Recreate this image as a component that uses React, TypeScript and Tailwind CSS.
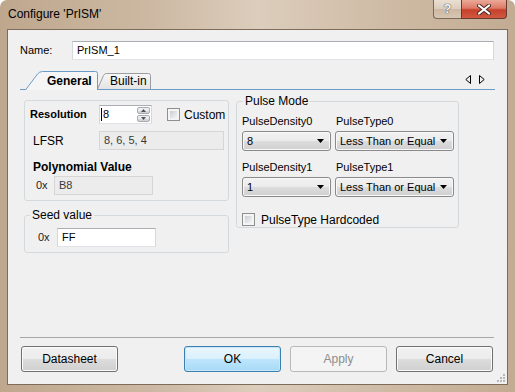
import type { ReactNode } from "react";

const btnFace =
	"bg-[linear-gradient(#f2f2f2_0%,#ebebeb_50%,#dddddd_50%,#cfcfcf_100%)]";

function DropArrow() {
	return (
		<svg width="7" height="4" viewBox="0 0 7 4">
			<path d="M0 0h7L3.5 4z" fill="#000" />
		</svg>
	);
}

function Combo({ value, width }: { value: string; width: string }) {
	return (
		<div
			className={`flex h-[20px] ${width} items-center rounded-[3px] border border-[#8a8a8a] ${btnFace} pl-[4px] pr-[6px] shadow-[inset_0_0_0_1px_#f8f8f8]`}
		>
			<span className="flex-1 leading-none">{value}</span>
			<DropArrow />
		</div>
	);
}

function CheckBox() {
	return (
		<div className="h-[13px] w-[13px] shrink-0 border border-[#8e8f8f] bg-[#f4f4f4] p-[2px]">
			<div className="h-full w-full bg-[linear-gradient(135deg,#c9cdd3,#f5f5f5)]" />
		</div>
	);
}

function Field({
	children,
	width,
	disabled = false,
}: {
	children: ReactNode;
	width: string;
	disabled?: boolean;
}) {
	return (
		<div
			className={`flex h-[19px] ${width} items-center border pl-[4px] ${
				disabled
					? "border-[#d6d6d6] bg-[#ececec] text-[#3a3a3a]"
					: "border-[#abadb3] border-x-[#d4d7dc] border-b-[#dfe3e8] bg-white"
			}`}
		>
			{children}
		</div>
	);
}

function DialogButton({
	label,
	kind = "normal",
	className = "",
}: {
	label: string;
	kind?: "normal" | "default" | "disabled";
	className?: string;
}) {
	const look =
		kind === "default"
			? "border-[#3c7fb1] bg-[linear-gradient(#eaf6fd_0%,#d9f0fc_50%,#bee6fd_50%,#a7d9f5_100%)] shadow-[inset_0_0_0_1px_#c8e6f6]"
			: kind === "disabled"
				? "border-[#b5b9bc] bg-[#f4f4f4] text-[#8d8d8d]"
				: `border-[#707070] ${btnFace} shadow-[inset_0_0_0_1px_#fbfbfb]`;
	return (
		<div
			className={`flex h-[26px] w-[97px] items-center justify-center rounded-[3px] border text-[12px] ${look} ${className}`}
		>
			{label}
		</div>
	);
}

export default function App() {
	return (
		<div className="relative h-[392px] w-[515px] overflow-hidden rounded-t-[7px] bg-[linear-gradient(90deg,#bea78d_0%,#cdb9a3_30%,#dccdbc_50%,#cfbba5_75%,#c2ab92_100%)] font-['Liberation_Sans',Arial,sans-serif] text-[11px] text-black">
			{/* Title bar */}
			<div className="flex h-[29px] items-start">
				<div className="pl-[8px] pt-[7px] text-[12px] leading-[15px]">
					Configure 'PrISM'
				</div>
				<div className="ml-auto mr-[8px] flex h-[19px]">
					<div className="flex w-[28px] items-center justify-center rounded-bl-[4px] border border-r-0 border-t-0 border-[#7a6a5a] bg-[linear-gradient(#eadfd3_0%,#dccdbd_50%,#cbb7a2_50%,#d8c6b2_100%)] text-[13px] font-bold text-[#f6f6f6] [text-shadow:0_0_1px_#444,0_0_1px_#444]">
						?
					</div>
					<div className="flex w-[46px] items-center justify-center rounded-br-[4px] border border-t-0 border-[#6a3a30] bg-[linear-gradient(#eba898_0%,#dc7b66_45%,#c7412c_55%,#d0593f_100%)]">
						<svg width="14" height="11" viewBox="0 0 14 11">
							<path d="M2 1.5l10 8M12 1.5l-10 8" stroke="#4a2a24" strokeWidth="4" strokeLinecap="round" />
							<path d="M2 1.5l10 8M12 1.5l-10 8" stroke="#fff" strokeWidth="2.2" strokeLinecap="round" />
						</svg>
					</div>
				</div>
			</div>

			{/* Client area */}
			<div className="relative mx-[7px] flex h-[356px] flex-col border border-[#7d6c5a] bg-[#f0f0f0] px-[12px]">
				{/* Name */}
				<div className="mt-[11px] flex h-[19px] items-center">
					<span className="w-[52px]">Name:</span>
					<div className="mr-[1px] flex h-full flex-1 items-center border border-[#abadb3] border-x-[#d4d7dc] border-b-[#dfe3e8] bg-white pl-[4px]">
						PrISM_1
					</div>
				</div>

				{/* Tab strip */}
				<div className="mt-[11px] flex h-[19px] items-end border-b border-[#6d9bc9] pl-[5px]">
					<div className="relative z-10 mb-[-1px] h-[19px] w-[73px]">
						<svg className="absolute inset-0" width="73" height="19" viewBox="0 0 73 19">
							<path
								d="M0.5 19 L12.5 3 Q14.5 0.5 17.5 0.5 L70.5 0.5 Q72.5 0.5 72.5 2.5 L72.5 19"
								fill="#f5f5f5"
								stroke="#6d9bc9"
							/>
						</svg>
						<div className="relative pl-[22px] pt-[3px] text-[12px] font-bold leading-[14px]">
							General
						</div>
					</div>
					<div className="relative ml-[-1px] h-[16px] w-[54px]">
						<svg className="absolute inset-0" width="54" height="16" viewBox="0 0 54 16">
							<defs>
								<linearGradient id="bt" x1="0" y1="0" x2="0" y2="1">
									<stop offset="0" stopColor="#f7f7f7" />
									<stop offset="1" stopColor="#e4e4e4" />
								</linearGradient>
							</defs>
							<path
								d="M0.5 16 L6.5 2.5 Q7.5 0.5 9.5 0.5 L51.5 0.5 Q53.5 0.5 53.5 2.5 L53.5 16"
								fill="url(#bt)"
								stroke="#9a9ca2"
							/>
						</svg>
						<div className="relative pl-[13px] pt-[1px] text-[12px] leading-[14px]">
							Built-in
						</div>
					</div>
					<div className="mb-[5px] ml-auto mr-[10px] flex gap-[8px]">
						<svg width="6" height="9" viewBox="0 0 6 9">
							<path d="M5.5 0.5 L0.8 4.5 L5.5 8.5 Z" fill="none" stroke="#000" />
						</svg>
						<svg width="6" height="9" viewBox="0 0 6 9">
							<path d="M0.5 0.5 L5.2 4.5 L0.5 8.5 Z" fill="none" stroke="#000" />
						</svg>
					</div>
				</div>

				{/* Tab content */}
				<div className="flex flex-1 items-start gap-[7px] pl-[4px] pt-[10px]">
					<div className="flex w-[205px] flex-col">
						<fieldset className="h-[101px] rounded-[3px] border border-[#d3d9dd] pl-[5px] pt-[4px]">
							<div className="flex h-[19px] items-center">
								<span className="w-[69px] text-[11px] font-bold">Resolution</span>
								<div className="flex h-[19px] w-[53px] items-center border border-[#abadb3] border-x-[#d4d7dc] border-b-[#dfe3e8] bg-white pl-[1px]">
									<span className="h-[13px] w-px bg-black" />
									<span className="flex-1 pl-[1px]">8</span>
									<div className="mr-[1px] flex h-[15px] w-[13px] flex-col gap-px">
										<div className={`flex flex-1 items-center justify-center rounded-[2px] border border-[#a8acb2] ${btnFace}`}>
											<svg width="5" height="3" viewBox="0 0 5 3">
												<path d="M0 3h5L2.5 0z" fill="#4a5460" />
											</svg>
										</div>
										<div className={`flex flex-1 items-center justify-center rounded-[2px] border border-[#a8acb2] ${btnFace}`}>
											<svg width="5" height="3" viewBox="0 0 5 3">
												<path d="M0 0h5L2.5 3z" fill="#4a5460" />
											</svg>
										</div>
									</div>
								</div>
								<div className="ml-[15px] flex items-center gap-[4px]">
									<CheckBox />
									<span className="text-[12px]">Custom</span>
								</div>
							</div>
							<div className="mt-[7px] flex h-[19px] items-center">
								<span className="w-[69px] pl-[3px] text-[12px]">LFSR</span>
								<Field width="w-[125px]" disabled>
									8, 6, 5, 4
								</Field>
							</div>
							<div className="mt-[10px] flex h-[14px] items-center pl-[3px] text-[12px] font-bold">
								Polynomial Value
							</div>
							<div className="mt-[2px] flex h-[19px] items-center">
								<span className="w-[24px] pl-[6px] text-[11px] text-[#222]">0x</span>
								<Field width="w-[99px]" disabled>
									B8
								</Field>
							</div>
						</fieldset>

						<fieldset className="mt-[8px] rounded-[3px] border border-[#d3d9dd] pb-[5px] pl-[5px]">
							<legend className="px-[2px] text-[12px] leading-[13px]">
								Seed value
							</legend>
							<div className="mt-[6px] flex h-[19px] items-center">
								<span className="w-[27px] pl-[8px] text-[11px] text-[#222]">0x</span>
								<Field width="w-[99px]">FF</Field>
							</div>
						</fieldset>
					</div>

					<fieldset className="-mt-[5px] w-[223px] rounded-[3px] border border-[#d3d9dd] pb-[1px] pl-[5px]">
						<legend className="ml-[1px] px-[2px] text-[12px] leading-[13px]">
							Pulse Mode
						</legend>
						<div className="mt-[6px] grid grid-cols-[89px_119px] gap-x-[4px]">
							<span className="h-[14px] leading-[14px]">PulseDensity0</span>
							<span className="h-[14px] pl-px leading-[14px]">PulseType0</span>
							<div className="mt-[3px]">
								<Combo value="8" width="w-[89px]" />
							</div>
							<div className="mt-[3px]">
								<Combo value="Less Than or Equal" width="w-[119px]" />
							</div>
							<span className="mt-[9px] h-[14px] leading-[14px]">PulseDensity1</span>
							<span className="mt-[9px] h-[14px] pl-px leading-[14px]">PulseType1</span>
							<div className="mt-[3px]">
								<Combo value="1" width="w-[89px]" />
							</div>
							<div className="mt-[3px]">
								<Combo value="Less Than or Equal" width="w-[119px]" />
							</div>
						</div>
						<div className="mt-[16px] flex h-[13px] items-center gap-[6px]">
							<CheckBox />
							<span className="text-[12px]">PulseType Hardcoded</span>
						</div>
					</fieldset>
				</div>

				{/* Separator and buttons */}
				<div className="mr-[1px] h-px bg-[#a7a7a7]" />
				<div className="mb-[12px] mt-[8px] flex h-[26px] pr-[2px]">
					<DialogButton label="Datasheet" className="ml-[1px]" />
					<DialogButton label="OK" kind="default" className="ml-auto" />
					<DialogButton label="Apply" kind="disabled" className="ml-[9px]" />
					<DialogButton label="Cancel" className="ml-[9px]" />
				</div>

				{/* Size grip */}
				<svg className="absolute bottom-[1px] right-[1px]" width="10" height="10" viewBox="0 0 10 10">
					<g fill="#b8b8b8">
						<rect x="7" y="1" width="2" height="2" />
						<rect x="4" y="4" width="2" height="2" />
						<rect x="7" y="4" width="2" height="2" />
						<rect x="1" y="7" width="2" height="2" />
						<rect x="4" y="7" width="2" height="2" />
						<rect x="7" y="7" width="2" height="2" />
					</g>
				</svg>
			</div>
		</div>
	);
}
